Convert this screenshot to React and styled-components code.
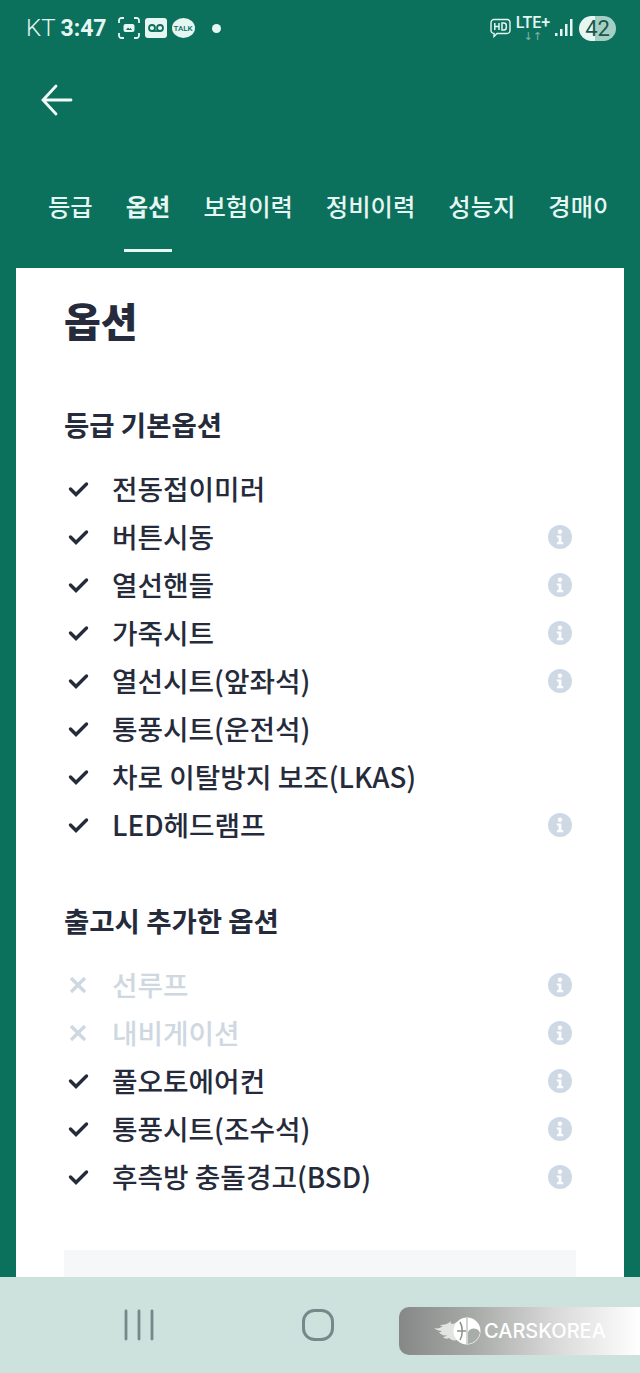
import React from 'react'
import styled, { createGlobalStyle } from 'styled-components'

const basicOptions = [
  { name: '전동접이미러', info: false },
  { name: '버튼시동', info: true },
  { name: '열선핸들', info: true },
  { name: '가죽시트', info: true },
  { name: '열선시트(앞좌석)', info: true },
  { name: '통풍시트(운전석)', info: false },
  { name: '차로 이탈방지 보조(LKAS)', info: false },
  { name: 'LED헤드램프', info: true },
]

const addedOptions = [
  { name: '선루프', info: true, off: true },
  { name: '내비게이션', info: true, off: true },
  { name: '풀오토에어컨', info: true },
  { name: '통풍시트(조수석)', info: true },
  { name: '후측방 충돌경고(BSD)', info: true },
]

const tabs = ['등급', '옵션', '보험이력', '정비이력', '성능지', '경매이력']

function OptionRow({ option }) {
  return (
    <Row>
      <Mark>
        {option.off ? (
          <svg width="20" height="20" viewBox="0 0 20 20" fill="none" stroke="#cfd8e1" strokeWidth="3.4">
            <path d="M3 3l14 14M17 3L3 17" />
          </svg>
        ) : (
          <svg width="21" height="16" viewBox="0 0 21 16" fill="none" stroke="#252b3b" strokeWidth="3.4" strokeLinecap="round">
            <path d="M2.500 8l5.500 5.500L18.500 3" />
          </svg>
        )}
      </Mark>
      <OptionName $off={option.off}>{option.name}</OptionName>
      {option.info && (
        <svg width="24" height="24" viewBox="0 0 24 24">
          <circle cx="12" cy="12" r="12" fill="#cfd9e5" />
          <circle cx="12" cy="6.800" r="2.200" fill="#fff" />
          <path d="M8.800 10.400h4.600v6.600h1.800v2.200H9v-2.200h1.600v-4.400H8.800z" fill="#fff" />
        </svg>
      )}
    </Row>
  )
}

export default function App() {
  return (
    <Page>
      <GlobalStyle />
      <StatusBar>
        <StatusLeft>
          <Carrier>KT</Carrier>
          <Clock>3:47</Clock>
          <svg width="22" height="22" viewBox="0 0 22 22" fill="none" stroke="#e6f6f2" strokeWidth="1.800">
            <path d="M1 6V3.500A2.500 2.500 0 0 1 3.500 1H6M16 1h2.500A2.500 2.500 0 0 1 21 3.500V6M21 16v2.500a2.500 2.500 0 0 1-2.500 2.500H16M6 21H3.500A2.500 2.500 0 0 1 1 18.500V16" />
            <rect x="5.500" y="7" width="11" height="8" rx="2" fill="#e6f6f2" stroke="none" />
            <path d="M8 13l2-2.500 1.500 1.500 1-1 1.500 2z" fill="#0b705c" stroke="none" />
          </svg>
          <svg width="22" height="20" viewBox="0 0 22 20">
            <rect width="22" height="20" rx="3" fill="#e6f6f2" />
            <circle cx="7" cy="10" r="3" fill="none" stroke="#0b705c" strokeWidth="1.800" />
            <circle cx="15" cy="10" r="3" fill="none" stroke="#0b705c" strokeWidth="1.800" />
            <path d="M7 13h8" stroke="#0b705c" strokeWidth="1.800" />
          </svg>
          <TalkBubble>TALK</TalkBubble>
          <Dot />
        </StatusLeft>
        <StatusRight>
          <svg width="21" height="20" viewBox="0 0 21 20" fill="none" stroke="#e6f6f2" strokeWidth="1.400">
            <path d="M4 1.500h13a3 3 0 0 1 3 3v8a3 3 0 0 1-3 3H7l-3 3v-3a3 3 0 0 1-3-3v-8a3 3 0 0 1 3-3z" />
            <path d="M4.800 5v7M9 5v7M4.800 8.500H9M12 5v7h1.800a2.500 2.500 0 0 0 2.500-2.500v-2A2.500 2.500 0 0 0 13.800 5z" strokeWidth="1.500" />
          </svg>
          <Lte>
            <LteLabel>LTE+</LteLabel>
            <LteArrows>↓↑</LteArrows>
          </Lte>
          <svg width="18" height="20" viewBox="0 0 18 20" fill="#e6f6f2">
            <rect x="0" y="15" width="2.500" height="3" />
            <rect x="5" y="11" width="2.500" height="7" />
            <rect x="10" y="6" width="2.500" height="12" />
            <rect x="15" y="1" width="2.500" height="17" />
          </svg>
          <Battery>42</Battery>
        </StatusRight>
      </StatusBar>

      <BackBar>
        <svg width="34" height="34" viewBox="0 0 34 34" fill="none" stroke="#f2fbf8" strokeWidth="2.800" strokeLinecap="round">
          <path d="M31 17H4M16 3L3 17l13 14" />
        </svg>
      </BackBar>

      <TabBar>
        {tabs.map((tab) => (
          <Tab key={tab} $active={tab === '옵션'}>{tab}</Tab>
        ))}
      </TabBar>

      <Panel>
        <Title>옵션</Title>
        <SectionTitle>등급 기본옵션</SectionTitle>
        <List>
          {basicOptions.map((el) => (
            <OptionRow key={el.name} option={el} />
          ))}
        </List>
        <SectionTitle>출고시 추가한 옵션</SectionTitle>
        <List>
          {addedOptions.map((el) => (
            <OptionRow key={el.name} option={el} />
          ))}
        </List>
        <NoticeBox />
      </Panel>

      <NavBar>
        <NavSlot>
          <svg width="32" height="32" viewBox="0 0 32 32" stroke="#75898a" strokeWidth="2.800" strokeLinecap="round">
            <path d="M3 2v28M16 2v28M29 2v28" />
          </svg>
        </NavSlot>
        <NavSlot>
          <svg width="32" height="32" viewBox="0 0 32 32" fill="none" stroke="#75898a" strokeWidth="3">
            <rect x="1.500" y="1.500" width="29" height="29" rx="11" />
          </svg>
        </NavSlot>
        <NavSlot />
        <Watermark>
          <svg width="48" height="28" viewBox="0 0 48 28">
            <path d="M1 11c4 1 6 0 9-2-1 0-2 0-3-1 4 0 8-1 11-4-1 2 0 3 2 3l4-2v18c-3 1-6 0-8-2-2 1-4 1-6-1 2 0 3-1 4-2-3 1-6 0-8-3 1 0 2 0 3-1-3 0-6-1-8-3z" fill="#e2e4e2" />
            <circle cx="34" cy="14" r="13.500" fill="#fff" />
            <path d="M34 1v26" stroke="#a5a8a6" strokeWidth="1" />
            <path d="M35 15a6.500 6.500 0 0 1 12 1 13.500 13.500 0 0 1-12 11z" fill="#a9adaa" />
            <path d="M27 5c3 5 3 13 0 18" fill="none" stroke="#8d918e" strokeWidth="1.500" />
            <path d="M24 14h9" stroke="#8d918e" strokeWidth="1.500" />
          </svg>
          <WatermarkText>CARSKOREA</WatermarkText>
        </Watermark>
      </NavBar>
    </Page>
  )
}

const GlobalStyle = createGlobalStyle`
  html, body {
    margin: 0;
    padding: 0;
    background: #0b705c;
  }
  * {
    box-sizing: border-box;
  }
  body {
    font-family: 'Noto Sans CJK KR', 'Noto Sans', sans-serif;
  }
`

const Page = styled.div`
  width: 640px;
  height: 1373px;
  background: #0b705c;
  display: flex;
  flex-direction: column;
  overflow: hidden;
`

const StatusBar = styled.div`
  height: 56px;
  padding: 0 24px 0 26px;
  display: flex;
  align-items: center;
  justify-content: space-between;
  color: #e6f6f2;
`

const StatusLeft = styled.div`
  display: flex;
  align-items: center;
  gap: 5px;
`

const StatusRight = styled.div`
  display: flex;
  align-items: center;
  gap: 6px;
`

const Carrier = styled.span`
  font-family: 'Roboto', sans-serif;
  font-size: 24px;
  font-weight: 300;
`

const Clock = styled.span`
  font-family: 'Roboto', sans-serif;
  font-size: 23px;
  font-weight: 700;
  margin-right: 6px;
`

const TalkBubble = styled.span`
  width: 23px;
  height: 20px;
  border-radius: 50%;
  background: #e6f6f2;
  color: #0b705c;
  font-family: 'Roboto', sans-serif;
  font-size: 8px;
  font-weight: 500;
  display: flex;
  align-items: center;
  justify-content: center;
`

const Dot = styled.span`
  width: 9px;
  height: 9px;
  margin-left: 12px;
  border-radius: 50%;
  background: #e6f6f2;
`

const Lte = styled.div`
  width: 32px;
  display: flex;
  flex-direction: column;
  align-items: center;
  line-height: 1;
`

const LteLabel = styled.span`
  font-family: 'Roboto', sans-serif;
  font-size: 16px;
  font-weight: 500;
`

const LteArrows = styled.span`
  font-family: 'DejaVu Sans', sans-serif;
  font-size: 11px;
  opacity: 0.5;
`

const Battery = styled.span`
  width: 37px;
  height: 25px;
  border-radius: 13px;
  background: linear-gradient(90deg, #e6f6f2 0 44%, #a5cfc3 44% 100%);
  color: #17584c;
  font-family: 'Roboto', sans-serif;
  font-size: 22px;
  display: flex;
  align-items: center;
  justify-content: center;
`

const BackBar = styled.div`
  height: 88px;
  margin-bottom: 39px;
  padding: 0 0 0 40px;
  display: flex;
  align-items: center;
`

const TabBar = styled.div`
  width: 608px;
  height: 85px;
  padding-left: 46px;
  display: flex;
  gap: 29px;
  overflow: hidden;
  flex-shrink: 0;
`

const Tab = styled.div`
  flex-shrink: 0;
  height: 69px;
  padding: 5px 2px 0;
  color: #e6f6f2;
  font-size: 24.300px;
  line-height: 36px;
  font-weight: ${(props) => (props.$active ? 700 : 500)};
  border-bottom: 3px solid ${(props) => (props.$active ? '#e6f6f2' : 'transparent')};
`

const Panel = styled.div`
  height: 1009px;
  margin: 0 16px;
  padding: 22px 48px 0;
  background: #fff;
  overflow: hidden;
  flex-shrink: 0;
`

const Title = styled.h1`
  margin: 0 0 54px;
  color: #252b3b;
  font-size: 40px;
  line-height: 60px;
  font-weight: 900;
`

const SectionTitle = styled.h2`
  margin: 0 0 21px;
  color: #252b3b;
  font-size: 27.500px;
  line-height: 40px;
  font-weight: 700;
`

const List = styled.div`
  margin-bottom: 51px;
`

const Row = styled.div`
  height: 48px;
  padding-right: 4px;
  display: flex;
  align-items: center;
`

const Mark = styled.span`
  width: 48px;
  padding-left: 4px;
  display: flex;
  align-items: center;
`

const OptionName = styled.span`
  flex: 1;
  padding-bottom: 2px;
  color: ${(props) => (props.$off ? '#cfd8e1' : '#252b3b')};
  font-size: 27.750px;
  font-weight: 500;
`

const NoticeBox = styled.div`
  height: 60px;
  margin-top: -2px;
  background: #f5f7f9;
`

const NavBar = styled.div`
  position: relative;
  flex: 1;
  padding: 0 123px 0 119px;
  background: #cde2dc;
  display: flex;
  align-items: center;
  justify-content: space-between;
`

const NavSlot = styled.div`
  width: 40px;
  display: flex;
  justify-content: center;
`

const Watermark = styled.div`
  position: absolute;
  top: 30px;
  right: 0;
  width: 241px;
  height: 48px;
  padding-left: 34px;
  border-radius: 10px 0 0 10px;
  background: linear-gradient(90deg, #858886 0%, #a7a9a7 30%, #d8d9d8 65%, #fff 100%);
  display: flex;
  align-items: center;
  gap: 3px;
`

const WatermarkText = styled.span`
  color: #fff;
  font-family: 'Inter', sans-serif;
  font-size: 20px;
  font-weight: 500;
`
